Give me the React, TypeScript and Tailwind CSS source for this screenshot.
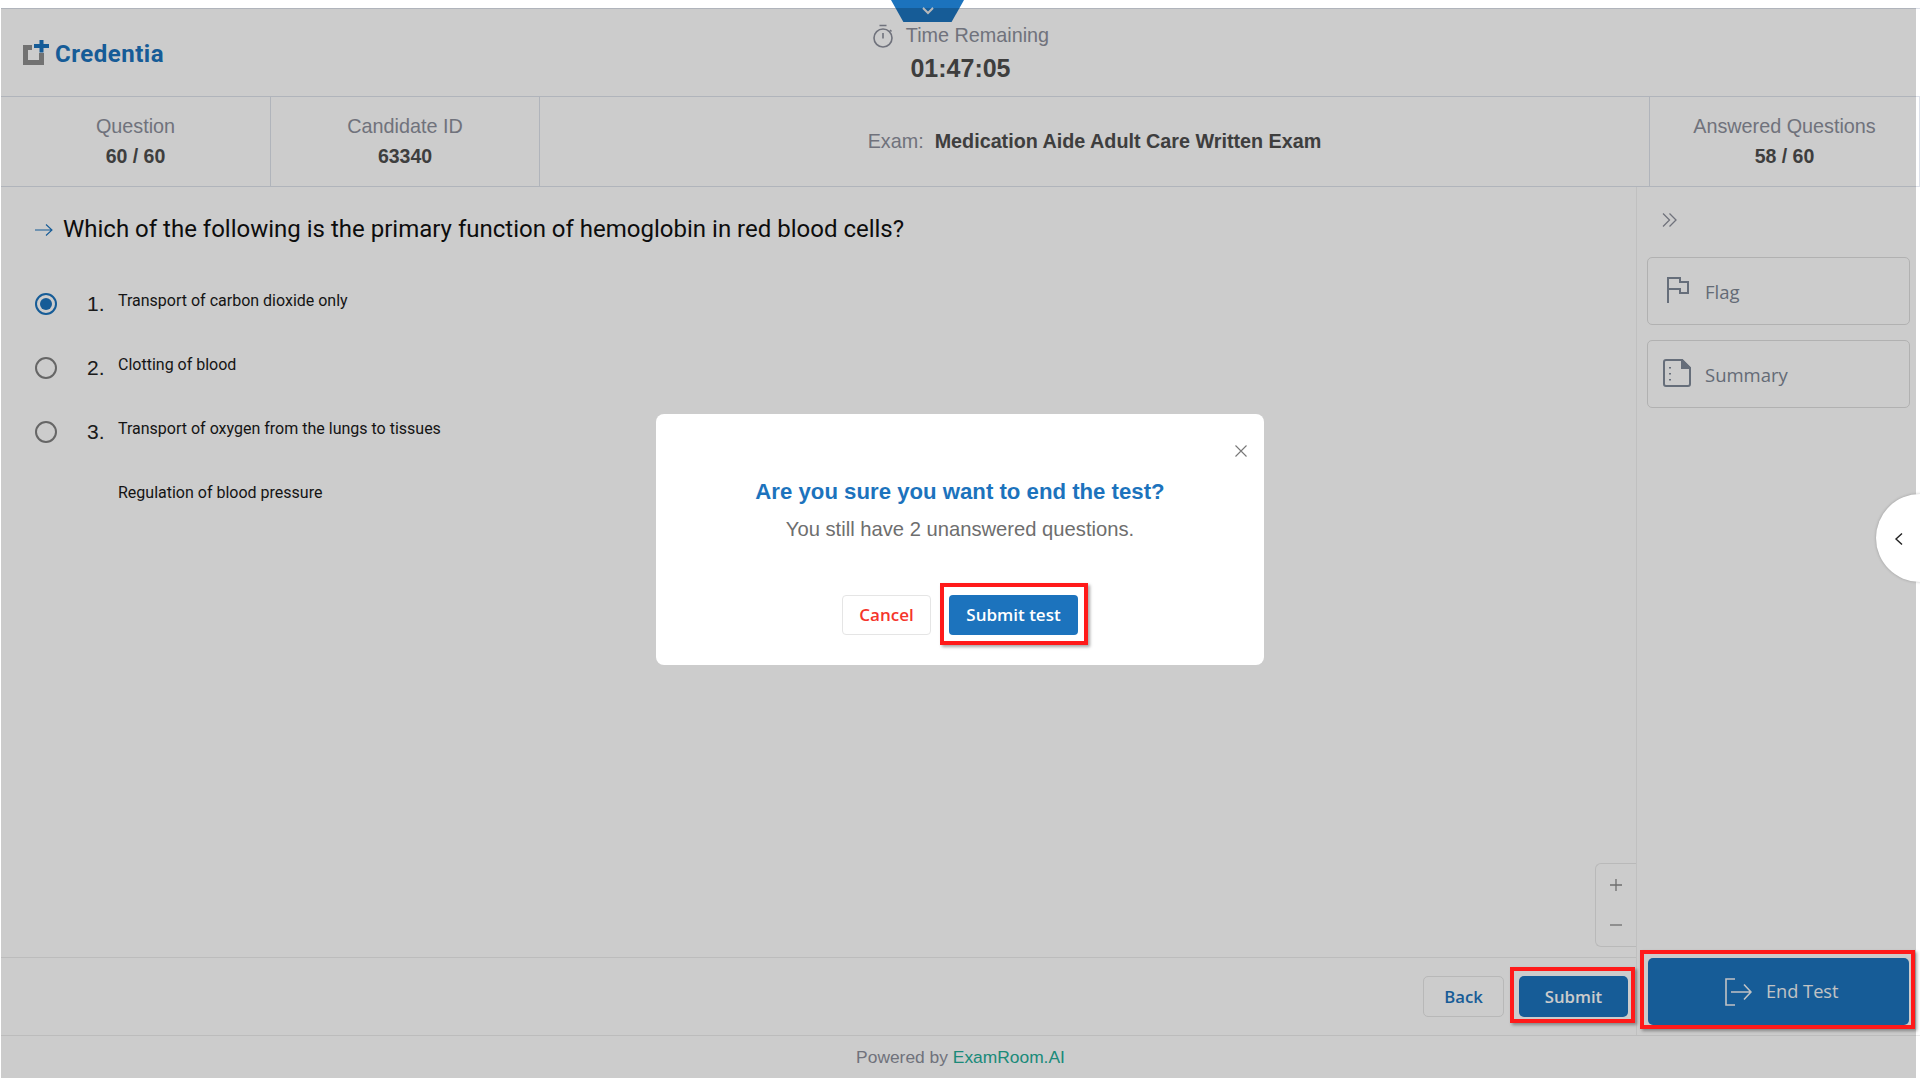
import React from "react";

const arial = "[font-family:'Liberation_Sans',Arial,sans-serif]";

function Stat({ label, value, className }: { label: string; value: string; className: string }) {
  return (
    <div className={`${className} flex flex-col items-center justify-center border-r border-[#dde1ea] pb-[2px]`}>
      <div className="text-[19.8px] leading-[30px] text-[#8c8f9b]">{label}</div>
      <div className="text-[19.5px] leading-[30px] font-bold text-[#4e4e4e]">{value}</div>
    </div>
  );
}

function Option({ n, text, checked }: { n?: string; text: string; checked?: boolean }) {
  return (
    <div className="flex h-[64px]">
      <div className="w-[34px] ml-[34px] pt-[13px] shrink-0">
        {n && (
          <div
            className={`w-[22px] h-[22px] rounded-full border-[2px] flex items-center justify-center ${
              checked ? "border-[#1c73bd]" : "border-[#808080]"
            }`}
          >
            {checked && <div className="w-[12px] h-[12px] rounded-full bg-[#1c73bd]" />}
          </div>
        )}
      </div>
      <div className={`w-[31px] ml-[18px] pt-[11px] text-[21px] leading-[26px] text-[#222] ${arial}`}>{n}</div>
      <div className="pt-[9px] text-[16px] leading-[24px] text-[#1a1a1a]">{text}</div>
    </div>
  );
}

export default function App() {
  return (
    <div className="relative w-[1920px] h-[1080px] overflow-hidden bg-white pl-px font-['Roboto',sans-serif]">
      {/* top drawer tab */}
      <div className="absolute left-[891px] top-0 w-[73px] h-[22px] z-10 bg-[#1c73bd] [clip-path:polygon(0_0,100%_0,83%_100%,17%_100%)] flex justify-center">
        <svg width="14" height="14" viewBox="0 0 14 14" className="mt-[4px]" fill="none" stroke="#e8e8e8" strokeWidth="2">
          <path d="M2 4 L7 9 L12 4" />
        </svg>
      </div>

      <div className="flex flex-col h-full pt-[8px]">
        {/* header */}
        <header className={`h-[89px] shrink-0 grid grid-cols-3 items-center border-y border-[#dde1ea] ${arial}`}>
          <div className="flex items-center pl-[22px] pt-[3px]">
            <svg width="26" height="25" viewBox="0 0 26 25" className="mr-[6px] -mt-[3px]">
              <path d="M0 5 H9 V10 H5 V20 H16 V13 H21 V25 H0 Z" fill="#8f8f8f" />
              <path d="M16.5 0 H20.5 V4 H26 V8 H20.5 V12.5 H16.5 V8 H11 V4 H16.5 Z" fill="#1c73bd" />
            </svg>
            <span className="font-['Roboto',sans-serif] font-bold text-[24px] tracking-[0.5px] text-[#1c73bd]">Credentia</span>
          </div>
          <div className="flex flex-col items-center -translate-y-[1px]">
            <div className="flex items-center gap-[12px] h-[34px]">
              <svg width="22" height="24" viewBox="0 0 22 24" fill="none" stroke="#8c8f9b" strokeWidth="1.6" className="-mt-[1px]">
                <circle cx="11" cy="14" r="9" />
                <path d="M7.5 1.5 H14.5 M11 9 V14.5 M18 6 L19.5 7.5" />
              </svg>
              <span className="text-[19.8px] text-[#8c8f9b]">Time Remaining</span>
            </div>
            <div className="-mt-[1px] text-[25px] leading-[32px] font-bold text-[#4e4e4e]">01:47:05</div>
          </div>
          <div />
        </header>

        {/* info row */}
        <div className={`h-[90px] shrink-0 flex border-b border-[#dde1ea] ${arial}`}>
          <Stat label="Question" value="60 / 60" className="w-[270px]" />
          <Stat label="Candidate ID" value="63340" className="w-[269px]" />
          <div className="flex-1 flex items-center justify-center border-r border-[#dde1ea] text-[19.75px]">
            <span className="text-[#8c8f9b] mr-[11px]">Exam:</span>
            <span className="font-bold text-[#4e4e4e]">Medication Aide Adult Care Written Exam</span>
          </div>
          <Stat label="Answered Questions" value="58 / 60" className="w-[270px]" />
        </div>

        {/* main */}
        <div className="h-[848px] shrink-0 flex">
          <div className="flex-1 flex flex-col">
            <div className="flex-1 flex flex-col border-b border-[#ececec]">
              <div className="flex items-center pl-[34px] pt-[20px] h-[63px]">
                <svg width="18" height="14" viewBox="0 0 18 14" fill="none" stroke="#1c73bd" strokeWidth="1.1" className="mt-[3px]">
                  <path d="M0 7 H17 M11 1.5 L17 7 L11 12.5" />
                </svg>
                <span className="ml-[10px] text-[24px] text-[#111]">
                  Which of the following is the primary function of hemoglobin in red blood cells?
                </span>
              </div>
              <div className="pt-[30px]">
                <Option n="1." text="Transport of carbon dioxide only" checked />
                <Option n="2." text="Clotting of blood" />
                <Option n="3." text="Transport of oxygen from the lungs to tissues" />
                <Option text="Regulation of blood pressure" />
              </div>
              <div className="mt-auto mb-[10px] self-end w-[41px] h-[84px] rounded-l-[6px] border border-r-0 border-[#e8e8e8] flex flex-col items-center justify-between py-[14px]">
                <svg width="14" height="14" viewBox="0 0 14 14" stroke="#8a8a8a" strokeWidth="1.3"><path d="M7 1 V13 M1 7 H13" /></svg>
                <svg width="14" height="14" viewBox="0 0 14 14" stroke="#8a8a8a" strokeWidth="1.3"><path d="M1 7 H13" /></svg>
              </div>
            </div>
            <div className="h-[77px] shrink-0 flex items-center justify-end gap-[15px] pr-[8px] font-['Open_Sans',sans-serif] font-semibold text-[16.7px]">
              <button className="w-[81px] h-[41px] rounded-[5px] border border-[#e6e6e6] text-[#1c73bd]">Back</button>
              <button className="relative w-[109px] h-[41px] rounded-[5px] bg-[#1c73bd] text-[#ffffff]">
                Submit
                <span className="absolute z-30 left-[-9px] top-[-9px] w-[125px] h-[56px] border-[4px] border-[#ff1a1a] shadow-[2px_2px_3px_rgba(0,0,0,0.35)]" />
              </button>
            </div>
          </div>

          <aside className="w-[284px] shrink-0 border-l border-[#f0f0f0] flex flex-col pl-[10px] pr-[10px] font-['Open_Sans',sans-serif]">
            <svg width="16" height="16" viewBox="0 0 16 16" fill="none" stroke="#8c8f9b" strokeWidth="1.3" className="ml-[15px] mt-[25px]">
              <path d="M1 1.5 L7.5 8 L1 14.5 M7.5 1.5 L14 8 L7.5 14.5" />
            </svg>
            <button className="mt-[29px] w-[263px] h-[68px] rounded-[5px] border border-[#dedede] flex items-center text-[18.5px] text-[#7d8694]">
              <svg width="24" height="28" viewBox="0 0 24 28" fill="none" stroke="#808a99" strokeWidth="2" className="ml-[18px] -mt-[2px]">
                <path d="M2 27 V2 H14 V6 H22 V17 H14 V13 H2" />
              </svg>
              <span className="ml-[15px] pt-[2px]">Flag</span>
            </button>
            <button className="mt-[15px] w-[263px] h-[68px] rounded-[5px] border border-[#dedede] flex items-center text-[18.5px] text-[#7d8694]">
              <svg width="28" height="28" viewBox="0 0 28 28" fill="none" stroke="#808a99" strokeWidth="2" className="ml-[15px] -mt-[2px]">
                <path d="M3 1 H19 L27 9 V25 Q27 27 25 27 H3 Q1 27 1 25 V3 Q1 1 3 1 Z" />
                <path d="M19 1 L27 9 H19 Z" fill="#808a99" />
                <path d="M7 8 V9.5 M7 14 V15.5 M7 20 V21.5" />
              </svg>
              <span className="ml-[14px] pt-[2px]">Summary</span>
            </button>
            <div className="mt-auto" />
            <button className="relative mb-[10px] w-[261px] h-[67px] ml-px rounded-[5px] bg-[#1c73bd] flex items-center text-[18.2px] text-[#f2f4f6]">
              <svg width="28" height="28" viewBox="0 0 28 28" fill="none" stroke="#f2f4f6" strokeWidth="1.6" className="ml-[76px]">
                <path d="M11 1 H2 V27 H11 M7 14 H27 M20 6.5 L27 14 L20 21.5" />
              </svg>
              <span className="ml-[14px]">End Test</span>
              <span className="absolute z-30 left-[-8px] top-[-8px] w-[275px] h-[79px] border-[4px] border-[#ff1a1a] shadow-[2px_2px_3px_rgba(0,0,0,0.35)]" />
            </button>
          </aside>
        </div>

        {/* footer */}
        <footer className={`flex-1 flex items-center justify-center border-t border-[#ececec] text-[17.4px] text-[#8c8f9b] pb-[2px] ${arial}`}>
          Powered by&nbsp;<span className="text-[#23ad98]">ExamRoom.AI</span>
        </footer>
      </div>

      {/* dimming layer */}
      <div className="absolute left-px top-[8px] w-[1915px] h-[1070px] bg-black/20 z-20" />

      {/* side drawer handle */}
      <div className="absolute z-30 left-[1876px] top-[494px] w-[90px] h-[88px] rounded-full bg-white shadow-[0_0_3px_rgba(0,0,0,0.25)]">
        <svg width="12" height="14" viewBox="0 0 12 14" fill="none" stroke="#222" strokeWidth="1.4" className="ml-[17px] mt-[38px]">
          <path d="M9 1.5 L3 7 L9 12.5" />
        </svg>
      </div>

      {/* confirm dialog */}
      <div className={`absolute z-30 left-[656px] top-[414px] w-[608px] h-[251px] rounded-[8px] bg-white flex flex-col items-center ${arial}`}>
        <svg width="12" height="12" viewBox="0 0 12 12" stroke="#777" strokeWidth="1.1" className="absolute right-[17px] top-[31px]">
          <path d="M0.5 0.5 L11.5 11.5 M11.5 0.5 L0.5 11.5" />
        </svg>
        <h2 className="mt-[63px] text-[22.2px] leading-[30px] font-bold text-[#1c73bd]">Are you sure you want to end the test?</h2>
        <p className="mt-[7px] text-[20.2px] leading-[30px] text-[#6e6e6e]">You still have 2 unanswered questions.</p>
        <div className="mt-[51px] flex gap-[18px] font-['Open_Sans',sans-serif] font-semibold text-[17px]">
          <button className="w-[89px] h-[40px] rounded-[4px] border border-[#e5e5e5] text-[#f5352b]">Cancel</button>
          <button className="relative w-[129px] h-[40px] rounded-[4px] bg-[#1c73bd] text-white">
            Submit test
            <span className="absolute left-[-9px] top-[-12px] w-[148px] h-[62px] border-[4px] border-[#ff1a1a] shadow-[2px_2px_3px_rgba(0,0,0,0.35)]" />
          </button>
        </div>
      </div>
    </div>
  );
}
